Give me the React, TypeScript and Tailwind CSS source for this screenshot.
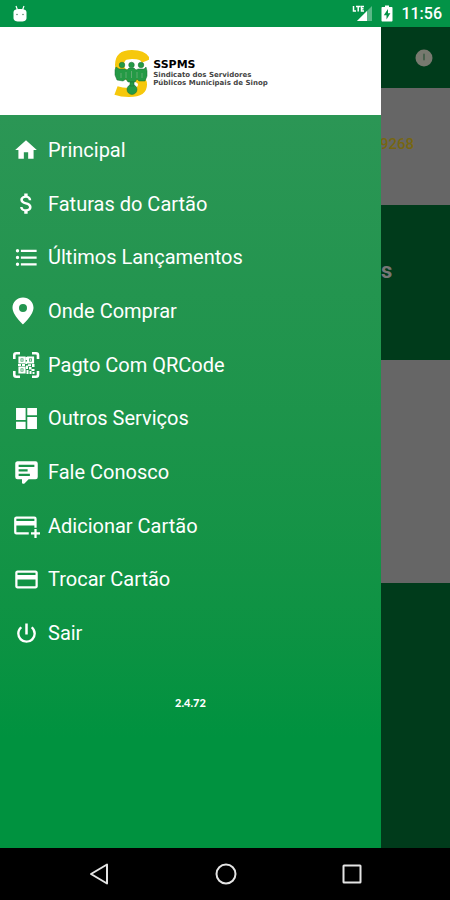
import { ReactElement, ReactNode } from "react";

type MenuItemType = {
  label: string;
  icon: ReactElement;
};

const Icon = ({ className = "size-[27px]", children }: { className?: string; children: ReactNode }) => (
  <svg viewBox="0 0 24 24" fill="currentColor" className={className} aria-hidden="true">
    {children}
  </svg>
);

const QrIcon = () => (
  <svg viewBox="0 0 28 28" fill="none" stroke="currentColor" className="w-7 h-7 shrink-0" aria-hidden="true">
    <path
      strokeWidth="2.6"
      strokeLinejoin="round"
      d="M2.300 8V4.300a2 2 0 0 1 2-2H8M20 2.300h4a2 2 0 0 1 2 2V8M26 20v3.700a2 2 0 0 1-2 2h-4M8 25.700H4.300a2 2 0 0 1-2-2V20"
    />
    <path strokeWidth="2.2" d="M7.500 6.500h5v5h-5zM16 6.500h5v5h-5zM7.500 16.500h5v5h-5z" />
    <path
      fill="currentColor"
      stroke="none"
      d="M9.200 8.200h1.600v1.600H9.200zM17.700 8.200h1.600v1.600h-1.600zM9.200 18.200h1.600v1.600H9.200zM13.400 6h1.600v3h-1.600zM13.400 10.500h1.600v2.500h-1.600zM6 13h3v2H6zM10 13h3v2h-3zM16 13.200h3v2h-3zM20 13h2.500v3H20zM14 14.500h2v3.500h-2zM17 16h2.500v2.500H17zM19.500 18h3v2h-3zM14.500 19h2v4h-2zM17.500 20h2v3h-2zM20.500 21h2v2h-2z"
    />
  </svg>
);

const items: MenuItemType[] = [
  {
    label: "Principal",
    icon: (
      <Icon className="size-[26px]">
        <path d="M10 20v-6h4v6h5v-8h3L12 3 2 12h3v8z" />
      </Icon>
    ),
  },
  {
    label: "Faturas do Cartão",
    icon: (
      <Icon>
        <path d="M11.800 10.900c-2.270-.59-3-1.200-3-2.150 0-1.090 1.010-1.850 2.700-1.850 1.780 0 2.440.85 2.500 2.100h2.210c-.07-1.720-1.120-3.300-3.210-3.810V3h-3v2.160c-1.940.42-3.500 1.680-3.500 3.610 0 2.310 1.910 3.460 4.700 4.130 2.500.6 3 1.480 3 2.410 0 .69-.49 1.790-2.700 1.790-2.060 0-2.870-.92-2.980-2.100h-2.200c.12 2.190 1.760 3.420 3.680 3.830V21h3v-2.150c1.950-.37 3.500-1.500 3.500-3.550 0-2.840-2.430-3.810-4.700-4.400z" />
      </Icon>
    ),
  },
  {
    label: "Últimos Lançamentos",
    icon: (
      <Icon>
        <path d="M7 5h14v2H7V5zm0 8v-2h14v2H7zM4 4.500a1.500 1.500 0 1 1 0 3 1.500 1.500 0 0 1 0-3zm0 6a1.500 1.500 0 1 1 0 3 1.500 1.500 0 0 1 0-3zM7 19v-2h14v2H7zm-3-2.500a1.500 1.500 0 1 1 0 3 1.500 1.500 0 0 1 0-3z" />
      </Icon>
    ),
  },
  {
    label: "Onde Comprar",
    icon: (
      <svg viewBox="0 0 22 28" fill="currentColor" className="w-[22px] h-7 mr-1.5" aria-hidden="true">
        <path
          fillRule="evenodd"
          d="M11 .5C5.200.5.500 5 .5 10.800.5 18 11 27.500 11 27.500S21.500 18 21.500 10.800C21.500 5 16.800.5 11 .5zm0 6.500a4 4 0 1 1 0 8 4 4 0 0 1 0-8z"
        />
      </svg>
    ),
  },
  { label: "Pagto Com QRCode", icon: <QrIcon /> },
  {
    label: "Outros Serviços",
    icon: (
      <Icon>
        <path d="M2.700 13.300h8.500V2.700H2.700v10.600zm0 8h8.500v-6.500H2.700v6.500zm10 0h8.600V10.700h-8.600v10.600zm0-18.600v6.500h8.600V2.700h-8.600z" />
      </Icon>
    ),
  },
  {
    label: "Fale Conosco",
    icon: (
      <Icon>
        <path d="M9 22a1 1 0 0 1-1-1v-3H4a2 2 0 0 1-2-2V4c0-1.110.9-2 2-2h16a2 2 0 0 1 2 2v12a2 2 0 0 1-2 2h-6.100l-3.700 3.710c-.2.190-.45.290-.7.290H9M5 5v2h14V5H5m0 4v2h8V9H5m0 4v2h10v-2H5z" />
      </Icon>
    ),
  },
  {
    label: "Adicionar Cartão",
    icon: (
      <Icon>
        <path d="M21 18h3v2h-3v3h-2v-3h-3v-2h3v-3h2v3M19 8V6H3v2h16m0 4H3v6h11v2H3a2 2 0 0 1-2-2V6c0-1.110.89-2 2-2h16a2 2 0 0 1 2 2v8h-2v-2z" />
      </Icon>
    ),
  },
  {
    label: "Trocar Cartão",
    icon: (
      <Icon>
        <path d="M20 4H4c-1.110 0-1.990.89-1.990 2L2 18c0 1.110.89 2 2 2h16c1.110 0 2-.89 2-2V6c0-1.110-.89-2-2-2zm0 14H4v-6h16v6zm0-10H4V6h16v2z" />
      </Icon>
    ),
  },
  {
    label: "Sair",
    icon: (
      <Icon className="size-[25px]">
        <path d="M13.200 2.500h-2.400v10.500h2.400V2.500zm4.630 2.670-1.600 1.600A6.700 6.700 0 0 1 18.700 12a6.700 6.700 0 1 1-10.900-5.220L6.170 5.170A8.930 8.930 0 0 0 3 12a9 9 0 0 0 18 0c0-2.740-1.230-5.180-3.170-6.830z" />
      </Icon>
    ),
  },
];

const StatusBar = () => (
  <div className="h-[27px] shrink-0 flex items-center justify-between bg-[#039347] text-white pl-3 pr-2">
    <svg viewBox="0 0 16 18" className="w-4 h-[18px]" aria-hidden="true">
      <path d="M4 1l1.500 4M12 1l-1.500 4" stroke="white" strokeWidth="1.200" />
      <path d="M1.500 7.500c0-3 3-3.500 6.500-3.500s6.500.5 6.500 3.500v5.500c0 3-3 3.500-6.500 3.500s-6.500-.5-6.500-3.500z" fill="white" />
      <circle cx="5" cy="9.500" r=".8" fill="#5d8a70" />
      <circle cx="11" cy="9.500" r=".8" fill="#5d8a70" />
    </svg>
    <div className="flex items-center">
      <svg viewBox="0 0 21 17" className="w-[21px] h-[17px] mr-2" aria-hidden="true">
        <path d="M20 1v15H5z" fill="white" opacity=".35" />
        <path d="M15 6v10H5z" fill="white" />
        <path d="M1.500 1v5h2.500M4 1.500h4.500M6.200 1.500V6.500M12 1.500H9.500V6h2.500M9.500 3.800h2" stroke="white" strokeWidth="1.500" fill="none" />
      </svg>
      <svg viewBox="0 0 12 17" className="w-3 h-[17px] mr-2" aria-hidden="true">
        <path d="M4 .5h4V2h2.500c.6 0 1 .4 1 1v12.500c0 .6-.4 1-1 1h-9c-.6 0-1-.4-1-1V3c0-.6.4-1 1-1H4z" fill="white" />
        <path d="M7 4L2.800 10.200h2.700V14.500L9.400 8.300H7z" fill="#039347" />
      </svg>
      <span className="text-base font-medium">11:56</span>
    </div>
  </div>
);

const Logo = () => (
  <div className="flex items-center gap-1">
    <svg viewBox="0 0 36 48" className="w-9 h-12" aria-hidden="true">
      <path
        d="M33 12C31 7 27 5.500 19 5.500 10 5.500 6.500 9 6.500 16c0 8 6 9 12 11 8 2.500 11 4 11 8.500C29.500 42 24 43.500 16 43.500c-5 0-9-.5-13-2"
        fill="none"
        stroke="#f6c80c"
        strokeWidth="9"
      />
      <path d="M4 24h24v9H16z" fill="#f6c80c" />
      <g fill="#249a45" stroke="#176b30" strokeWidth=".5">
        <circle cx="9" cy="16" r="2.800" />
        <circle cx="18.500" cy="16" r="2.800" />
        <circle cx="28" cy="16" r="2.800" />
        <path d="M2 21l1-3 3 2h6l2 1 2-2h5l2 2 2-1h6l2-2 1 4v5l-2 5h-6l-2-2-2 3h-7l-2-3-3 2-6-1-2-5z" />
        <circle cx="19" cy="40.500" r="5" />
        <path d="M17 33h4v4h-4z" />
      </g>
      <path d="M8 24v5M13 23v6M18.500 22v7M24 23v6M29 24v5" stroke="#6fae7c" strokeWidth=".8" />
    </svg>
    <div className="font-['DejaVu_Sans',sans-serif] font-bold text-[7px] leading-2 text-[#444]">
      <p className="text-[11px] leading-3 text-black">SSPMS</p>
      <p>Sindicato dos Servidores</p>
      <p>Públicos Municipais de Sinop</p>
    </div>
  </div>
);

const Drawer = () => (
  <aside className="flex-1 min-w-0 flex flex-col">
    <header className="h-[88px] shrink-0 flex items-center justify-center bg-white pt-1">
      <Logo />
    </header>
    <div className="flex-1 bg-linear-to-b from-[#2b9655] to-[#00923f] to-85% pt-2">
      <nav className="h-[537px] grid auto-rows-fr">
        {items.map((item) => (
          <button key={item.label} className="flex items-center pl-3 text-left text-xl text-white">
            <span className="w-7 mr-2 flex shrink-0 justify-center">{item.icon}</span>
            {item.label}
          </button>
        ))}
      </nav>
      <p className="mt-[35px] text-center font-['Lato',sans-serif] font-black text-[11px] leading-4 text-white">2.4.72</p>
    </div>
  </aside>
);

// Page left visible (dimmed) to the right of the open drawer
const DimmedPage = () => (
  <main className="w-[69px] shrink-0 flex flex-col overflow-hidden bg-[#003b1b]">
    <div className="h-[61px] flex items-center justify-center pl-4">
      <button aria-label="Ajuda">
        <svg viewBox="0 0 18 18" className="size-[18px]" aria-hidden="true">
          <circle cx="9" cy="9" r="8.500" fill="#77796f" />
          <path d="M9 5.500v1.500M9 7v3.500" stroke="#47604c" strokeWidth="2" strokeLinecap="round" />
        </svg>
      </button>
    </div>
    <div className="h-[117px] flex justify-end bg-[#666] pt-12 pr-9">
      <span className="text-[15px] leading-4 font-medium text-[#776611]">9268</span>
    </div>
    <div className="h-[155px] flex items-start pt-13">
      <span className="text-[22px] leading-7 font-bold text-[#777]">s</span>
    </div>
    <div className="h-[223px] bg-[#666]" />
  </main>
);

const NavigationBar = () => (
  <div className="h-[52px] shrink-0 flex items-center justify-between bg-black text-[#e4e4e4] pl-[88px] pr-[87px]">
    <button aria-label="Voltar">
      <svg viewBox="0 0 22 22" className="size-[22px]" fill="none" stroke="currentColor" strokeWidth="2">
        <path d="M19 1.500v19L3 11z" strokeLinejoin="round" />
      </svg>
    </button>
    <button aria-label="Início">
      <svg viewBox="0 0 22 22" className="size-[22px]" fill="none" stroke="currentColor" strokeWidth="2">
        <circle cx="11" cy="11" r="9.500" />
      </svg>
    </button>
    <button aria-label="Recentes">
      <svg viewBox="0 0 22 22" className="size-[22px]" fill="none" stroke="currentColor" strokeWidth="2">
        <rect x="2.500" y="2.500" width="17" height="17" rx=".5" />
      </svg>
    </button>
  </div>
);

export default function App() {
  return (
    <div className="min-h-screen flex flex-col font-['Roboto',sans-serif]">
      <StatusBar />
      <div className="flex-1 flex">
        <Drawer />
        <DimmedPage />
      </div>
      <NavigationBar />
    </div>
  );
}
